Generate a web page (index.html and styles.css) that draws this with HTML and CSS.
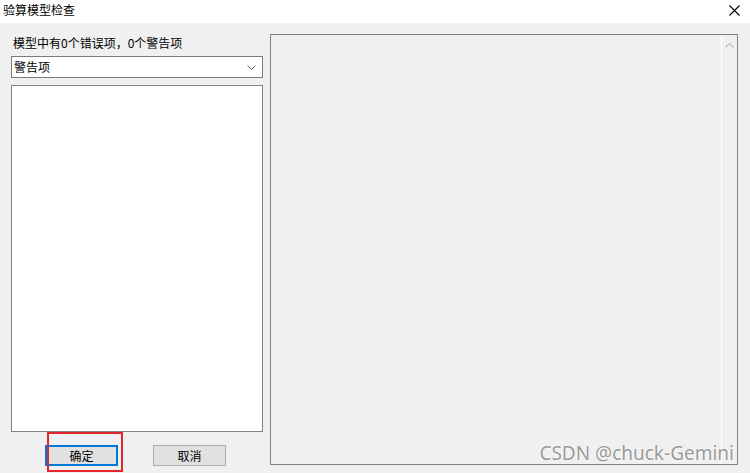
FILE: index.html
```html
<!DOCTYPE html>
<html lang="zh-CN">
<head>
    <meta charset="UTF-8">
    <title>验算模型检查</title>
    <link rel="stylesheet" href="styles.css">
</head>
<body>
    <!-- Window title bar -->
    <div class="title-bar">
        <span class="title-text">验算模型检查</span>
        <svg class="close-icon" width="11" height="11" viewBox="0 0 11 11">
            <path d="M0.5 0.5 L10.5 10.5 M10.5 0.5 L0.5 10.5" stroke="#000" stroke-width="1.1" fill="none"/>
        </svg>
    </div>

    <div class="dialog-body">
        <!-- Left column: summary, filter and list -->
        <div class="left-column">
            <div class="summary-label">模型中有0个错误项，0个警告项</div>
            <div class="combo-box">
                <span class="combo-text">警告项</span>
                <svg class="combo-arrow" width="9" height="5" viewBox="0 0 9 5">
                    <path d="M0.5 0.5 L4.5 4.5 L8.5 0.5" stroke="#606060" stroke-width="1" fill="none"/>
                </svg>
            </div>
            <div class="item-list"></div>
            <div class="button-row">
                <div class="button-wrap">
                    <button class="dialog-button default">确定</button>
                    <div class="highlight-box"></div>
                </div>
                <button class="dialog-button">取消</button>
            </div>
        </div>

        <!-- Right column: detail panel -->
        <div class="detail-panel">
            <div class="detail-content"></div>
            <div class="scroll-track">
                <svg class="scroll-up" width="9" height="5" viewBox="0 0 9 5">
                    <path d="M0.5 4.5 L4.5 0.5 L8.5 4.5" stroke="#c2c2c2" stroke-width="1.4" fill="none"/>
                </svg>
            </div>
            <div class="watermark">CSDN @chuck-Gemini</div>
        </div>
    </div>
</body>
</html>
```

FILE: styles.css
```css
/* Base window styling */
body {
    margin: 0;
    padding: 0;
    width: 750px;
    height: 473px;
    overflow: hidden;
    background: #f0f0f0;
    font-family: "Microsoft YaHei", "Noto Sans CJK SC", sans-serif;
    font-size: 12px;
    color: #000;
}

/* Title bar */
.title-bar {
    height: 23px;
    background: #fff;
    display: flex;
    align-items: center;
    justify-content: space-between;
    padding: 0 10px 0 3px;
    box-sizing: border-box;
}

.title-text {
    font-size: 12px;
    line-height: 16px;
    margin-top: -4px;
}

.close-icon {
    margin-top: -3px;
}

/* Main dialog area */
.dialog-body {
    display: flex;
    padding: 11px 12px 0 11px;
    gap: 7px;
}

.left-column {
    width: 252px;
    display: flex;
    flex-direction: column;
}

.summary-label {
    line-height: 18px;
    padding-left: 2px;
}

/* Combo box */
.combo-box {
    margin-top: 4px;
    height: 22px;
    box-sizing: border-box;
    border: 1px solid #7a7a7a;
    background: #fff;
    display: flex;
    align-items: center;
    justify-content: space-between;
    padding: 0 6px 0 2px;
}

.combo-text {
    line-height: 18px;
}

/* List box */
.item-list {
    margin-top: 7px;
    height: 347px;
    box-sizing: border-box;
    border: 1px solid #828282;
    background: #fff;
}

/* Buttons */
.button-row {
    display: flex;
    gap: 35px;
    margin-top: 13px;
    padding-left: 34px;
}

.button-wrap {
    position: relative;
}

.dialog-button {
    width: 73px;
    height: 21px;
    box-sizing: border-box;
    background: #e1e1e1;
    border: 1px solid #adadad;
    font-family: inherit;
    font-size: 12px;
    padding: 0;
    color: #000;
}

.dialog-button.default {
    border: 2px solid #0078d7;
}

/* Red annotation rectangle drawn over the OK button */
.highlight-box {
    position: absolute;
    left: 2px;
    top: -13px;
    width: 76px;
    height: 40px;
    box-sizing: border-box;
    border: 2px solid #e2262b;
}

/* Detail panel on the right */
.detail-panel {
    position: relative;
    width: 468px;
    height: 431px;
    box-sizing: border-box;
    border: 1px solid #828282;
    display: flex;
    background: #f0f0f0;
}

.detail-content {
    flex: 1;
}

.scroll-track {
    width: 16px;
    border-left: 1px solid #fff;
    display: flex;
    justify-content: center;
    padding-top: 8px;
    box-sizing: border-box;
}

.watermark {
    position: absolute;
    right: 3px;
    bottom: 0;
    font-family: "Microsoft YaHei", "Noto Sans", sans-serif;
    font-size: 19px;
    line-height: 22px;
    color: #9a9a9a;
    text-shadow: 0 0 2px #fff, 0 0 1px #fff;
}
```
